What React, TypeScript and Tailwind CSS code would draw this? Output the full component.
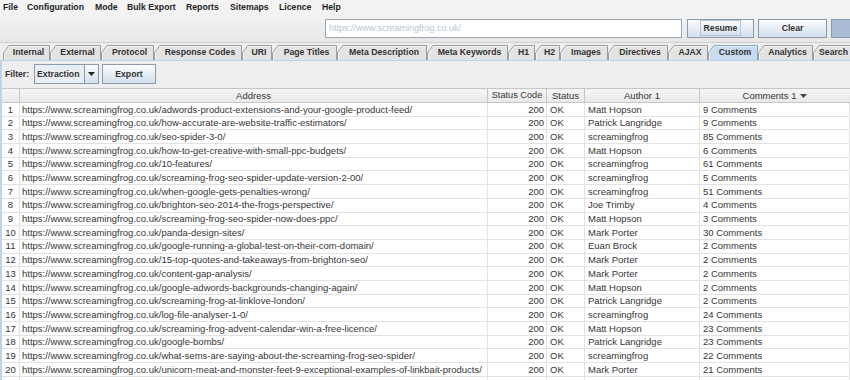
import React from "react";

const menus: [string, number][] = [
  ["File", 24],
  ["Configuration", 68],
  ["Mode", 32],
  ["Bulk Export", 59],
  ["Reports", 44],
  ["Sitemaps", 49],
  ["Licence", 43],
  ["Help", 40],
];

const tabs: [string, number][] = [
  ["Internal", 47],
  ["External", 51],
  ["Protocol", 53],
  ["Response Codes", 88],
  ["URI", 30],
  ["Page Titles", 65],
  ["Meta Description", 90],
  ["Meta Keywords", 81],
  ["H1", 27],
  ["H2", 25],
  ["Images", 48],
  ["Directives", 60],
  ["AJAX", 40],
  ["Custom", 50],
  ["Analytics", 55],
  ["Search", 60],
];

const rows: [string, string, string][] = [
  ["adwords-product-extensions-and-your-google-product-feed/", "Matt Hopson", "9 Comments"],
  ["how-accurate-are-website-traffic-estimators/", "Patrick Langridge", "9 Comments"],
  ["seo-spider-3-0/", "screamingfrog", "85 Comments"],
  ["how-to-get-creative-with-small-ppc-budgets/", "Matt Hopson", "6 Comments"],
  ["10-features/", "screamingfrog", "61 Comments"],
  ["screaming-frog-seo-spider-update-version-2-00/", "screamingfrog", "5 Comments"],
  ["when-google-gets-penalties-wrong/", "screamingfrog", "51 Comments"],
  ["brighton-seo-2014-the-frogs-perspective/", "Joe Trimby", "4 Comments"],
  ["screaming-frog-seo-spider-now-does-ppc/", "Matt Hopson", "3 Comments"],
  ["panda-design-sites/", "Mark Porter", "30 Comments"],
  ["google-running-a-global-test-on-their-com-domain/", "Euan Brock", "2 Comments"],
  ["15-top-quotes-and-takeaways-from-brighton-seo/", "Mark Porter", "2 Comments"],
  ["content-gap-analysis/", "Mark Porter", "2 Comments"],
  ["google-adwords-backgrounds-changing-again/", "Matt Hopson", "2 Comments"],
  ["screaming-frog-at-linklove-london/", "Patrick Langridge", "2 Comments"],
  ["log-file-analyser-1-0/", "screamingfrog", "24 Comments"],
  ["screaming-frog-advent-calendar-win-a-free-licence/", "Matt Hopson", "23 Comments"],
  ["google-bombs/", "Patrick Langridge", "23 Comments"],
  ["what-sems-are-saying-about-the-screaming-frog-seo-spider/", "screamingfrog", "22 Comments"],
  ["unicorn-meat-and-monster-feet-9-exceptional-examples-of-linkbait-products/", "Mark Porter", "21 Comments"],
];

function Tab({ label, w, selected, left }: { label: string; w: number; selected?: boolean; left?: boolean }) {
  const h = 15;
  return (
    <div
      className={`relative shrink-0 h-[15px] flex items-center ${left ? "justify-start pl-[6px]" : "justify-center pl-[4px]"}`}
      style={{ width: w }}
    >
      <svg className="absolute left-0 top-0" width={w} height={h}>
        <path
          d={`M0.5,${h} V8 L6,0.5 H${w - 0.5} V${h}`}
          fill={selected ? "#c8daef" : "#e3e3e3"}
          stroke={selected ? "#8fa6bf" : "#9c9c9c"}
          strokeWidth={1}
        />
        <path d={`M1.5,${h} V8.5 L6.5,1.5 H${w - 1.5}`} fill="none" stroke={selected ? "#e4eef8" : "#f4f4f4"} strokeWidth={1} />
      </svg>
      <span className="relative text-[8.7px] font-bold text-[#333] leading-none whitespace-nowrap">{label}</span>
    </div>
  );
}

const cell = "border-r border-b border-[#e2e2e2] flex items-center overflow-hidden whitespace-nowrap";

export default function App() {
  return (
    <div className="w-[850px] h-[380px] overflow-hidden bg-[#eeeeee] font-['Liberation_Sans',Arial,sans-serif] text-[#333]">
      {/* menu bar */}
      <div className="h-[14px] flex items-center pl-[3px] bg-[#f3f3f3]">
        {menus.map(([m, w]) => (
          <div key={m} className="shrink-0 text-[8.7px] font-bold leading-none text-[#222]" style={{ width: w }}>
            {m}
          </div>
        ))}
      </div>
      {/* toolbar */}
      <div className="h-[29px] flex items-center border-b border-[#cfcfcf] bg-gradient-to-b from-[#f2f2f2] to-[#e7e7e7] overflow-hidden">
        <div className="ml-[325px] shrink-0 w-[357px] h-[19px] bg-white border border-[#9aa6b2] flex items-center pl-[3px]">
          <span className="text-[9px] text-[#b9c5d2] leading-none">https://www.screamingfrog.co.uk/</span>
        </div>
        <div className="ml-[5px] shrink-0 w-[67px] h-[19px] border border-[#8a9bab] bg-gradient-to-b from-[#fbfcfd] to-[#d3dfec] flex items-center justify-center">
          <span className="text-[8.7px] font-bold leading-none text-[#333] border border-[#b5c2cf] px-[3px] py-[3px]">Resume</span>
        </div>
        <div className="ml-[4px] shrink-0 w-[69px] h-[19px] border border-[#8a9bab] bg-gradient-to-b from-[#fbfcfd] to-[#d3dfec] flex items-center justify-center">
          <span className="text-[8.7px] font-bold leading-none text-[#333]">Clear</span>
        </div>
        <div className="ml-[4px] shrink-0 w-[40px] h-[19px] border border-[#8a9bab] bg-[#a9bdd7]" />
      </div>
      {/* tabs */}
      <div className="h-[17px] flex items-end pl-[3px] overflow-hidden">
        {tabs.map(([t, w]) => (
          <Tab key={t} label={t} w={w} selected={t === "Custom"} left={t === "Search"} />
        ))}
      </div>
      {/* panel */}
      <div className="border-t border-l-2 border-[#bfd2e7] h-[320px]">
        {/* filter row */}
        <div className="h-[27px] flex items-center pb-[1px]">
          <span className="ml-[3px] w-[29px] shrink-0 text-[8.7px] font-bold leading-none">Filter:</span>
          <div className="shrink-0 w-[65px] h-[20px] border border-[#8a9bab] flex">
            <div className="flex-1 bg-[#e9eef4] flex items-center pl-[2px]">
              <span className="text-[8.7px] font-bold leading-none">Extraction</span>
            </div>
            <div className="w-[14px] border-l border-[#8a9bab] bg-gradient-to-b from-[#fbfcfd] to-[#d3dfec] flex items-center justify-center">
              <svg width="7" height="4">
                <path d="M0,0 H7 L3.5,4 Z" fill="#222" />
              </svg>
            </div>
          </div>
          <div className="ml-[3px] shrink-0 w-[54px] h-[20px] border border-[#8a9bab] bg-gradient-to-b from-[#fbfcfd] to-[#d3dfec] flex items-center justify-center">
            <span className="text-[8.7px] font-bold leading-none">Export</span>
          </div>
        </div>
        {/* table */}
        <div className="text-[9.5px] leading-none text-[#363636]">
          <div className="h-[15px] flex bg-gradient-to-b from-[#f6f6f6] to-[#e8e8e8]">
            <div className="w-[18px] shrink-0 border-r border-b border-t border-[#c6c6c6]" />
            <div className="w-[468px] shrink-0 border-r border-b border-t border-[#c6c6c6] flex items-center justify-center">Address</div>
            <div className="w-[59px] shrink-0 border-r border-b border-t border-[#c6c6c6] flex items-center justify-center text-[9.2px]">Status Code</div>
            <div className="w-[38px] shrink-0 border-r border-b border-t border-[#c6c6c6] flex items-center justify-center">Status</div>
            <div className="w-[115px] shrink-0 border-r border-b border-t border-[#c6c6c6] flex items-center justify-center">Author 1</div>
            <div className="w-[150px] shrink-0 border-b border-t border-[#c6c6c6] flex items-center justify-center gap-[4px]">
              <span>Comments 1</span>
              <svg width="7" height="4">
                <path d="M0,0 H7 L3.5,4 Z" fill="#444" />
              </svg>
            </div>
          </div>
          {rows.map(([path, author, comments], i) => (
            <div key={i} className="h-[13.7px] flex bg-white">
              <div className={`w-[18px] shrink-0 justify-center ${cell}`}>{i + 1}</div>
              <div className={`w-[468px] shrink-0 pl-[2px] ${cell}`}>https://www.screamingfrog.co.uk/{path}</div>
              <div className={`w-[59px] shrink-0 justify-end pr-[2px] ${cell}`}>200</div>
              <div className={`w-[38px] shrink-0 pl-[3px] ${cell}`}>OK</div>
              <div className={`w-[115px] shrink-0 pl-[3px] ${cell}`}>{author}</div>
              <div className={`w-[150px] shrink-0 pl-[3px] ${cell}`}>{comments}</div>
            </div>
          ))}
          <div className="h-[13.7px] flex bg-white">
            <div className={`w-[18px] shrink-0 ${cell}`} />
            <div className={`w-[468px] shrink-0 ${cell}`} />
            <div className={`w-[59px] shrink-0 ${cell}`} />
            <div className={`w-[38px] shrink-0 ${cell}`} />
            <div className={`w-[115px] shrink-0 ${cell}`} />
            <div className={`w-[150px] shrink-0 ${cell}`} />
          </div>
        </div>
      </div>
    </div>
  );
}
